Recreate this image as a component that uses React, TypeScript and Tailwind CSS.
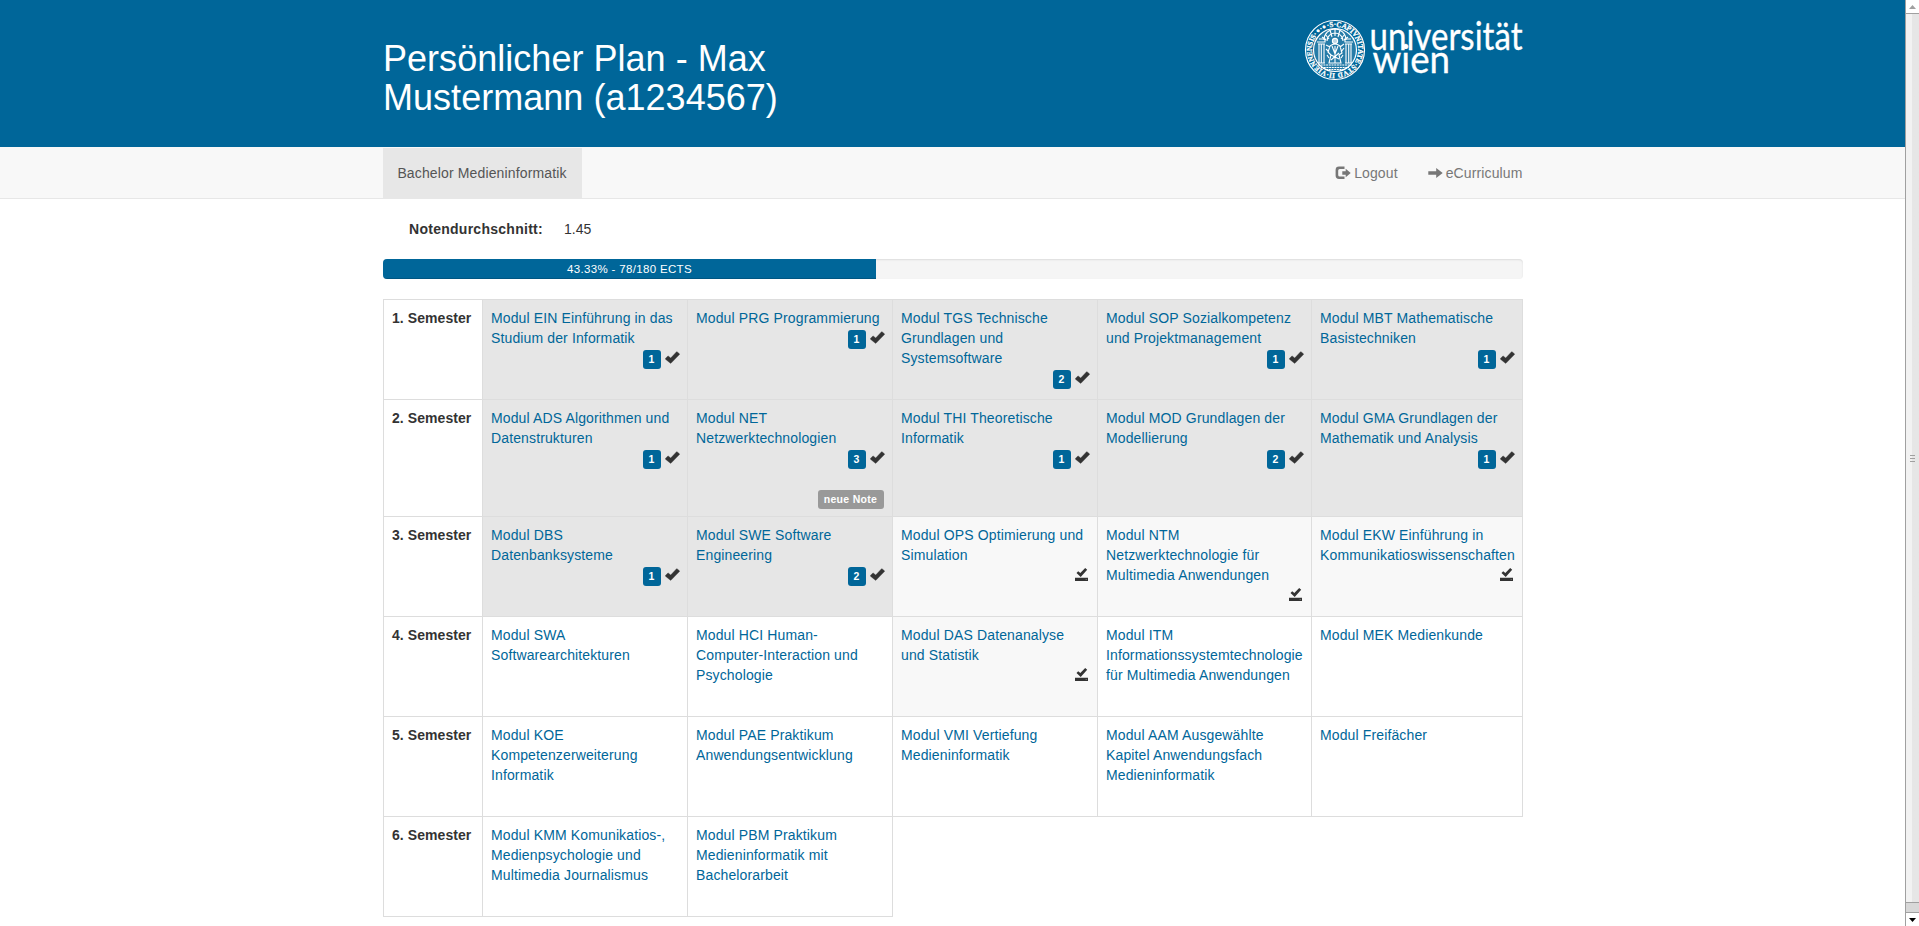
import React from "react";

type Status = "done" | "registered" | "open";

interface Module {
  name: string;
  status: Status;
  grade?: number;
  isNew?: boolean;
}

const done = (name: string, grade: number, isNew = false): Module => ({ name, status: "done", grade, isNew });
const registered = (name: string): Module => ({ name, status: "registered" });
const open = (name: string): Module => ({ name, status: "open" });

const semesters: Module[][] = [
  [
    done("Modul EIN Einführung in das Studium der Informatik", 1),
    done("Modul PRG Programmierung", 1),
    done("Modul TGS Technische Grundlagen und Systemsoftware", 2),
    done("Modul SOP Sozialkompetenz und Projektmanagement", 1),
    done("Modul MBT Mathematische Basistechniken", 1),
  ],
  [
    done("Modul ADS Algorithmen und Datenstrukturen", 1),
    done("Modul NET Netzwerktechnologien", 3, true),
    done("Modul THI Theoretische Informatik", 1),
    done("Modul MOD Grundlagen der Modellierung", 2),
    done("Modul GMA Grundlagen der Mathematik und Analysis", 1),
  ],
  [
    done("Modul DBS Datenbanksysteme", 1),
    done("Modul SWE Software Engineering", 2),
    registered("Modul OPS Optimierung und Simulation"),
    registered("Modul NTM Netzwerktechnologie für Multimedia Anwendungen"),
    registered("Modul EKW Einführung in Kommunikatioswissenschaften"),
  ],
  [
    open("Modul SWA Softwarearchitekturen"),
    open("Modul HCI Human-Computer-Interaction und Psychologie"),
    registered("Modul DAS Datenanalyse und Statistik"),
    open("Modul ITM Informationssystemtechnologie für Multimedia Anwendungen"),
    open("Modul MEK Medienkunde"),
  ],
  [
    open("Modul KOE Kompetenzerweiterung Informatik"),
    open("Modul PAE Praktikum Anwendungsentwicklung"),
    open("Modul VMI Vertiefung Medieninformatik"),
    open("Modul AAM Ausgewählte Kapitel Anwendungsfach Medieninformatik"),
    open("Modul Freifächer"),
  ],
  [
    open("Modul KMM Komunikatios-, Medienpsychologie und Multimedia Journalismus"),
    open("Modul PBM Praktikum Medieninformatik mit Bachelorarbeit"),
  ],
];

const cellBackground: Record<Status, string> = {
  done: "bg-[#e6e6e6]",
  registered: "bg-[#f8f8f8]",
  open: "bg-white",
};

function CheckIcon() {
  return (
    <svg className="-mr-px mt-[3px] h-[13px] w-[15px]" viewBox="0 0 15 13" fill="#333" stroke="#333" strokeWidth=".4">
      <path d="M.5 7.4 2.7 5.200q.4-.3.8 0L5.700 7.100 11.400.9q.4-.4.8 0l2.200 1.900q.4.4 0 .8L6.100 12.100q-.5.4-.9 0L.5 8.200q-.3-.4 0-.8z" />
    </svg>
  );
}

function SavedIcon() {
  return (
    <svg className="mr-px mt-[3px] h-[14px] w-[13px]" viewBox="0 0 13 14" fill="#333">
      <path d="M1.500 5 3.200 3.200 5.300 4.900 10.200 0 12.200 1.800 5.700 9zM0 9.700h13V13H0z" />
      <path d="M10.6 10.900h1.300v.8h-1.300z" fill="#888" />
    </svg>
  );
}

function LogoutIcon() {
  return (
    <svg className="h-[14px] w-[16px]" viewBox="0 0 16 14" fill="#777">
      <path d="M9.5 .6H4Q.6.6.6 4v5.6Q.6 13 4 13h5.5v-2.400H4.700q-1.500 0-1.500-1.500V4.500q0-1.500 1.500-1.500h4.800z" />
      <path d="M7.300 5.200h3.400V2.800l5 4.200-5 4.200V8.800H7.300z" />
    </svg>
  );
}

function ArrowIcon() {
  return (
    <svg className="h-[14px] w-[15px]" viewBox="0 0 15 14" fill="#777">
      <path d="M.3 5.200h7.900V1.900l6.500 5.100-6.500 5.100V8.800H.3z" />
    </svg>
  );
}

function Seal() {
  return (
    <svg className="h-[62px] w-[62px]" viewBox="0 0 62 62" fill="none" stroke="#fff">
      <defs>
        <path id="ring" d="M31 54.200A23.200 23.200 0 1 1 31.100 54.200" />
      </defs>
      <circle cx="31" cy="31" r="29.500" strokeWidth="1.200" />
      <circle cx="31" cy="31" r="21.500" strokeWidth="1.200" fill="#fff" fillOpacity=".15" />
      <text
        fill="#fff"
        stroke="#fff"
        strokeWidth=".3"
        className="font-['Liberation_Serif',serif] text-[7.5px] font-bold"
      >
        <textPath href="#ring" textLength="143" lengthAdjust="spacingAndGlyphs">
          II·VIENNENSIS·∘·∘·S·CAPIVNITATE·STVD
        </textPath>
      </text>
      <g strokeWidth="1.100">
        <path d="M14 25h7M14 44h7M41 25h7M41 44h7M15 25v19M17.300 25v19M20 25v19M42 25v19M44.700 25v19M47 25v19M13 23h8v-3h-6M49 23h-8v-3h6" />
        <path d="M20 21a11 11 0 0 1 22 0M23 22a8 8 0 0 1 16 0M31 10v7M26 11l2 7M36 11l-2 7M21 15l4 5M41 15l-4 5M18 18l4 3M44 18l-4 3" />
        <circle cx="31" cy="22" r="2.600" fill="#fff" fillOpacity=".7" />
        <path d="M26 27q5-4 10 0l2 7-3 2 2 8H25l2-8-3-3zM28 27l3 8 3-8M27 36l8 4M35 34l-8 7M31 27v17M22 30l3 3M40 29l-3 4M23 36l2 3M39 36l-2 3M22 26l4 2M40 25l-4 3" />
        <path d="M14 46h34M17 48.500h28M22 50.500h18" strokeDasharray="2 .7" />
      </g>
    </svg>
  );
}

function Logo() {
  return (
    <div className="-mr-[6px] mt-[19px] flex items-start">
      <Seal />
      <svg
        className="h-[62px] w-[163px] font-['Lato',sans-serif] text-[38px]"
        viewBox="-6 0 163 62"
        fill="#fff"
        stroke="#fff"
        strokeWidth=".3"
      >
        <text x="-2.500" y="31" textLength="153" lengthAdjust="spacingAndGlyphs">
          universität
        </text>
        <text x=".5" y="53.500" textLength="77.500" lengthAdjust="spacingAndGlyphs">
          wien
        </text>
      </svg>
    </div>
  );
}

function Label({ children, className }: { children: React.ReactNode; className: string }) {
  return (
    <span
      className={`mt-[2px] flex h-[19px] items-center justify-center rounded-[3px] text-[10.5px] leading-none font-bold text-white ${className}`}
    >
      {children}
    </span>
  );
}

function ModuleCell({ module }: { module: Module }) {
  return (
    <td className={`border border-[#ddd] pt-2 pr-2 pl-[8.5px] align-top ${cellBackground[module.status]}`}>
      <a className="block tracking-[0.13px] text-[#069]">{module.name}</a>
      {module.status === "done" && (
        <div className="flex h-5 items-start justify-end gap-[4px]">
          <Label className="w-[18px] bg-[#069]">{module.grade}</Label>
          <CheckIcon />
        </div>
      )}
      {module.status === "registered" && (
        <div className="flex h-5 items-start justify-end">
          <SavedIcon />
        </div>
      )}
      {module.isNew && (
        <div className="mt-5 flex h-5 justify-end">
          <Label className="w-[66px] bg-[#999] tracking-[0.3px]">neue Note</Label>
        </div>
      )}
    </td>
  );
}

function Scrollbar() {
  return (
    <div className="flex w-[14px] flex-col border-l border-[#a0a0a0] bg-white">
      <div className="flex h-[14px] items-center justify-center border-b border-[#a0a0a0]">
        <svg className="h-1 w-[7px]" viewBox="0 0 7 4" fill="#a0a0a0">
          <path d="M0 4 3.500 0 7 4z" />
        </svg>
      </div>
      <div className="flex flex-1 items-center justify-center bg-linear-to-r from-[#f2f2f2] from-50% to-[#e6e6e6] to-50%">
        <div className="flex flex-col gap-[2px]">
          <div className="h-px w-[5px] bg-[#a0a0a0]" />
          <div className="h-px w-[5px] bg-[#a0a0a0]" />
          <div className="h-px w-[5px] bg-[#a0a0a0]" />
        </div>
      </div>
      <div className="h-[11px] border-y border-[#a0a0a0] bg-[#d8d8d8]" />
      <div className="flex h-[13px] items-center justify-center">
        <svg className="h-1 w-[7px]" viewBox="0 0 7 4" fill="#000">
          <path d="M0 0h7L3.500 4z" />
        </svg>
      </div>
    </div>
  );
}

export default function App() {
  return (
    <div className="flex h-[926px] w-[1919px] overflow-hidden bg-white font-['Liberation_Sans',Arial,sans-serif] text-sm leading-5 text-[#333]">
      <div className="w-[1905px]">
        <header className="h-[147px] bg-[#069]">
          <div className="mx-auto flex w-[1140px] justify-between">
            <h1 className="mt-[39px] w-[440px] pl-[0.5px] text-[36px] leading-[39px] tracking-[0.03px] text-white">
              Persönlicher Plan - Max Mustermann (a1234567)
            </h1>
            <Logo />
          </div>
        </header>
        <nav className="h-[52px] border-b border-[#e7e7e7] bg-[#f8f8f8] pt-px">
          <div className="mx-auto flex h-[50px] w-[1140px] items-center justify-between tracking-[0.12px] text-[#777]">
            <a className="flex h-full w-[199px] items-center justify-center bg-[#e7e7e7] tracking-[0.14px] text-[#555]">
              Bachelor Medieninformatik
            </a>
            <div className="flex gap-[30px]">
              <a className="flex items-center gap-[3px]">
                <LogoutIcon />
                Logout
              </a>
              <a className="flex items-center gap-[3px]">
                <ArrowIcon />
                eCurriculum
              </a>
            </div>
          </div>
        </nav>
        <main className="mx-auto w-[1140px]">
          <div className="flex gap-[21px] pt-5 pl-[26.5px]">
            <strong className="tracking-[0.27px]">Notendurchschnitt:</strong>
            <span>1.45</span>
          </div>
          <div className="mt-5 h-5 overflow-hidden rounded bg-[#f5f5f5] shadow-[inset_0_1px_2px_rgba(0,0,0,0.1)]">
            <div className="h-full w-[43.33%] bg-[#069] text-center text-[11.5px] leading-5 tracking-[0.33px] text-white shadow-[inset_0_-1px_0_rgba(0,0,0,0.15)]">
              43.33% - 78/180 ECTS
            </div>
          </div>
          <table className="mt-5 w-[1139px] table-fixed border-collapse">
            <colgroup>
              <col className="w-[99px]" />
              <col className="w-[205px]" />
              <col className="w-[205px]" />
              <col className="w-[205px]" />
              <col className="w-[214px]" />
              <col className="w-[211px]" />
            </colgroup>
            <tbody>
              {semesters.map((modules, i) => (
                <tr key={i} className={i === 1 ? "h-[117px]" : "h-[100px]"}>
                  <th className="border border-[#ddd] pt-2 pl-[8.5px] text-left align-top font-bold tracking-[0.07px] whitespace-nowrap">
                    {i + 1}. Semester
                  </th>
                  {modules.map((module) => (
                    <ModuleCell key={module.name} module={module} />
                  ))}
                </tr>
              ))}
            </tbody>
          </table>
        </main>
      </div>
      <Scrollbar />
    </div>
  );
}
